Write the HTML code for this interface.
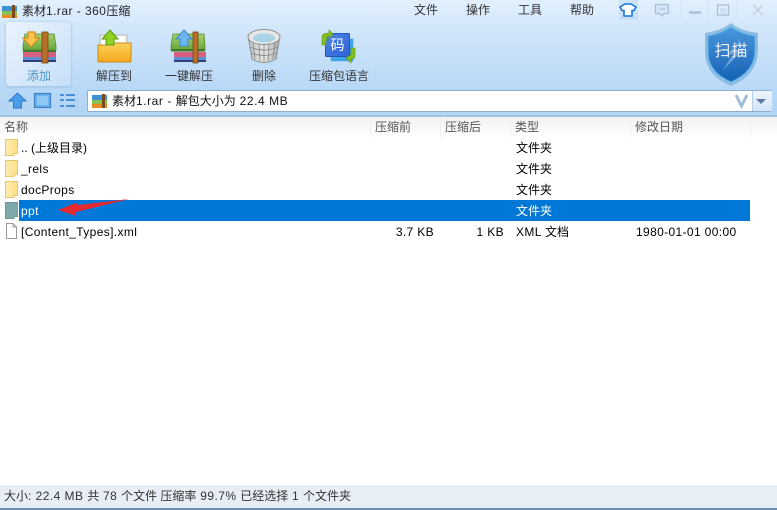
<!DOCTYPE html>
<html><head><meta charset="utf-8">
<style>
html,body{margin:0;padding:0;width:777px;height:510px;overflow:hidden;background:#fff}
body{position:relative;font-family:"Liberation Sans","Noto Sans CJK SC",sans-serif;font-size:12px;color:#000}
.t{position:absolute;white-space:nowrap;line-height:16px}
.c{text-align:center}
.ab{position:absolute;left:0;top:0}
.l{letter-spacing:.36px}
.m{letter-spacing:.55px}
</style></head><body>
<div style="position:absolute;left:0;top:0;width:777px;height:116px;background:linear-gradient(#e2f0fd 0,#d2e6fa 30px,#b8d8f7 90px,#b1d3f5 116px)"></div>
<div style="position:absolute;left:0;top:115px;width:777px;height:2px;background:#a5c4e2"></div>
<!-- add button highlight -->
<div style="position:absolute;left:6px;top:22px;width:65px;height:64px;border-radius:3px;background:linear-gradient(135deg,#eaf4fe,#c6dff8);box-shadow:0 0 2px #a9c9e9,0 1px 2px #9dc0e4"></div>
<svg class="ab" width="777" height="116" viewBox="0 0 777 116">
<defs>
<linearGradient id="gb" x1="0" y1="0" x2="0" y2="1"><stop offset="0" stop-color="#a5cf6a"/><stop offset="1" stop-color="#67a83c"/></linearGradient>
<linearGradient id="fy" x1="0" y1="0" x2="0" y2="1"><stop offset="0" stop-color="#fcd25a"/><stop offset="1" stop-color="#f4a81c"/></linearGradient>
<linearGradient id="sh" x1="0" y1="0" x2="0" y2="1"><stop offset="0" stop-color="#4c97dc"/><stop offset="1" stop-color="#1561b4"/></linearGradient>
<linearGradient id="sq" x1="0" y1="0" x2="1" y2="1"><stop offset="0" stop-color="#4f86e8"/><stop offset="1" stop-color="#2f62d4"/></linearGradient>
<linearGradient id="tr" x1="0" y1="0" x2="1" y2="0"><stop offset="0" stop-color="#c0c1c1"/><stop offset=".5" stop-color="#e8e9e9"/><stop offset="1" stop-color="#a8a9a9"/></linearGradient>
</defs>
<!-- title icon -->
<rect x="2" y="6" width="15" height="5" fill="#3f92d2"/><rect x="2" y="11" width="15" height="5" fill="#8cc152"/><rect x="2" y="15" width="15" height="3" fill="#e78b22"/><rect x="12" y="5" width="3" height="13" fill="#7b4a1a"/>
<!-- add -->
<path d="M25 34H54L56 46V50H23V46z" fill="url(#gb)" stroke="#4e8a2e" stroke-width=".8"/>
<rect x="23" y="50" width="33" height="2" fill="#3f7d28"/>
<rect x="23" y="52" width="33" height="5" fill="#d85f7e"/>
<rect x="23" y="57" width="33" height="4" fill="#5f8ed2"/>
<rect x="23" y="60" width="33" height="2" fill="#2c3f78"/>
<rect x="42" y="32" width="6" height="31" fill="#b86e26" stroke="#7b4716" stroke-width=".8"/>
<path d="M28 32H35V38H39L31 47 23 38H28z" fill="#fbc64b" stroke="#d98a1c" stroke-width="1.200"/>
<!-- extract -->
<path d="M100 35H127V60H100z" fill="#f4f4f2" stroke="#b9b9b0"/>
<path d="M101 37H124V46H101z" fill="#fff"/>
<path d="M98 45H110L113 43H131V61Q131 62 130 62H99Q98 62 98 61z" fill="url(#fy)" stroke="#c98a1a"/>
<path d="M106 45V39H102L110 30 118 39H114V45z" fill="#8fd21f" stroke="#5b9a16"/>
<!-- one-click -->
<path d="M173 34H204L205 46V50H171V46z" fill="url(#gb)" stroke="#4e8a2e" stroke-width=".8"/>
<rect x="171" y="49" width="34" height="2.500" fill="#3f7d28"/>
<rect x="174" y="52" width="32" height="5" fill="#d85f7e"/>
<rect x="174" y="57" width="32" height="4" fill="#5f8ed2"/>
<rect x="174" y="60" width="32" height="2" fill="#2c3f78"/>
<rect x="193" y="32" width="5" height="31" fill="#b86e26" stroke="#7b4716" stroke-width=".8"/>
<path d="M180 46V39H176L184 30 192 39H188V46z" fill="#6db7f3" stroke="#3f86cc"/>
<!-- delete -->
<path d="M248 36L252 59Q264 66 276 59L280 36z" fill="url(#tr)" stroke="#8f9090"/>
<path d="M253 43L255 59M259 44L260 61M264 44V62M269 44L268 61M275 43L273 59M250 47Q264 53 278 47M251 53Q264 58 277 53" stroke="#8a8a8a" stroke-width=".9" fill="none"/>
<ellipse cx="264" cy="37" rx="16" ry="7.500" fill="#e5e6e6" stroke="#8f9090"/>
<ellipse cx="264" cy="38" rx="11" ry="4.500" fill="#a9d2e6"/>
<!-- code -->
<rect x="330.500" y="38.500" width="23" height="23" fill="#3fa5ea" stroke="#9fd3f5"/>
<rect x="325.500" y="33.500" width="24" height="23" rx="1" fill="url(#sq)" stroke="#2454b4"/>
<path d="M322 45V37Q322 33 329 33V30L333 34 329 39V36Q326 36 326 45z" fill="#84bd22" stroke="#5f9215" stroke-width=".6"/>
<path d="M355 48V56Q355 59 351 59V63L346 58 351 54V56Q351 56 351 48z" fill="#84bd22" stroke="#5f9215" stroke-width=".6"/>
<!-- nav icons -->
<path d="M9 101L17.500 93 26 101H21.500V108H13.500V101z" fill="#4a9de8" stroke="#2f78c4"/>
<rect x="34.500" y="93.500" width="16" height="14" fill="#6cb0ec" stroke="#3f7fc4" stroke-width="1.200"/>
<rect x="37" y="96" width="11" height="9" fill="#8ec6f4"/>
<path d="M60 94h4v2h-4zM66 94h9v2h-9zM60 99h4v2h-4zM66 99h9v2h-9zM60 105h4v2h-4zM66 105h9v2h-9z" fill="#4a8fd4"/>
<!-- skin shirt -->
<rect x="619" y="0" width="19" height="20" fill="#bcd9f6" opacity=".6"/>
<path d="M625 4H631L636 7 634 10.500H632V16H624V10.500H622L620 7z" fill="#fff" stroke="#1477d8" stroke-width="1.600"/>
<!-- msg -->
<path d="M655.500 4.500H668.500V13.500H664L662 16 660 13.500H655.500z" fill="#d3e5f7" stroke="#a8bfd6" stroke-width="1.300"/>
<path d="M659 9H665" stroke="#a8bfd6"/>
<!-- sep -->
<path d="M681 0V18M708.500 0V18M737 0V18" stroke="#cfe2f6"/>
<path d="M689 12.500H701" stroke="#a9bfd5" stroke-width="2.400"/>
<rect x="717.500" y="5" width="11" height="10" fill="none" stroke="#a9bfd5" stroke-width="1.300"/>
<rect x="720" y="8" width="6" height="5" fill="#cfe0f2"/>
<path d="M753 5L763 15M763 5L753 15" stroke="#dbe7f3" stroke-width="3.200"/>
<path d="M753 5L763 15M763 5L753 15" stroke="#a9bfd5" stroke-width="1" opacity=".6"/>
<!-- shield -->
<path d="M731 23Q741 31 758 33V52Q757 75 731 86 705 75 705 52V33Q721 31 731 23z" fill="#8cbbe2"/>
<path d="M731 27Q741 34 755 36V52Q754 72 731 82 708 72 708 52V36Q721 34 731 27z" fill="url(#sh)" stroke="#58b6ee" stroke-width="1"/>
<path d="M741 38L726 56 733 54 723 70 744 49 735 51z" fill="#6aa2dc"/>
</svg>
<!-- address bar -->
<div style="position:absolute;left:87px;top:90px;width:683px;height:20px;background:#fff;border:1px solid #8fadcc;border-radius:2px"></div>
<div style="position:absolute;left:752px;top:91px;width:19px;height:20px;background:linear-gradient(#eef5fd,#d3e5f8);border-left:1px solid #b5cde5"></div>
<svg class="ab" width="777" height="116" viewBox="0 0 777 116">
<rect x="92" y="95" width="15" height="5" fill="#3f92d2"/><rect x="92" y="100" width="15" height="5" fill="#8cc152"/><rect x="92" y="104" width="15" height="4" fill="#e78b22"/><rect x="102" y="94" width="3" height="14" fill="#7b4a1a"/>
<path d="M736 95L741.500 106 747 95" fill="none" stroke="#9cbbd9" stroke-width="2.800"/>
<path d="M756 99H766L761 104z" fill="#5d7aa6"/>
</svg>
<!-- titlebar text -->
<div class="t" style="left:22px;top:3px;color:#222">素材<span style="letter-spacing:.45px">1.rar - 360</span>压缩</div>
<div class="t" style="left:414px;top:2px;color:#333">文件</div>
<div class="t" style="left:466px;top:2px;color:#333">操作</div>
<div class="t" style="left:518px;top:2px;color:#333">工具</div>
<div class="t" style="left:570px;top:2px;color:#333">帮助</div>
<!-- toolbar labels -->
<div class="t c" style="left:0;top:68px;width:78px;color:#4d93c9">添加</div>
<div class="t c" style="left:84px;top:68px;width:60px;color:#333">解压到</div>
<div class="t c" style="left:154px;top:68px;width:70px;color:#333">一键解压</div>
<div class="t c" style="left:234px;top:68px;width:60px;color:#333">删除</div>
<div class="t c" style="left:299px;top:68px;width:80px;color:#333">压缩包语言</div>
<div class="t c" style="left:325px;top:37px;width:25px;color:#fff;font-size:14px">码</div>
<div class="t c" style="left:705px;top:44px;width:53px;color:#e8eef6;font-size:16px;letter-spacing:1px">扫描</div>
<div class="t" style="left:112px;top:93px;color:#111">素材<span class="m">1.rar - </span>解包大小为<span class="m"> 22.4 MB</span></div>
<!-- list header -->
<div style="position:absolute;left:0;top:117px;width:777px;height:20px;background:linear-gradient(#f1f1f1,#fff)"></div>
<svg class="ab" width="777" height="140"><path d="M370.500 117V137M440.500 117V137M510.500 117V137M630.500 117V137M750.500 117V137" stroke="#ededed"/></svg>
<div class="t" style="left:4px;top:119px;color:#555">名称</div>
<div class="t" style="left:375px;top:119px;color:#555">压缩前</div>
<div class="t" style="left:445px;top:119px;color:#555">压缩后</div>
<div class="t" style="left:515px;top:119px;color:#555">类型</div>
<div class="t" style="left:635px;top:119px;color:#555">修改日期</div>
<!-- selection -->
<div style="position:absolute;left:19px;top:200px;width:731px;height:21px;background:#0078d7"></div>
<!-- icons -->
<svg class="ab" width="777" height="245">
<defs><linearGradient id="fo" x1="0" y1="0" x2="1" y2="0"><stop offset="0" stop-color="#fdebb0"/><stop offset="1" stop-color="#fddf87"/></linearGradient></defs>
<g fill="url(#fo)" stroke="#e9c66a"><path d="M5.500 139.500H17.500V153.500H14V155.500H5.500z"/><path d="M5.500 160.500H17.500V174.500H14V176.500H5.500z"/><path d="M5.500 181.500H17.500V195.500H14V197.500H5.500z"/></g>
<path d="M5.500 202.500H17.500V216.500H14V218.500H5.500z" fill="#7da9ab" stroke="#6f9a9d"/>
<path d="M6.500 223.500H13L16.500 227V238.500H6.500z" fill="#fff" stroke="#9a9a9a"/><path d="M13 223.500V227H16.500" fill="none" stroke="#9a9a9a"/>
<!-- arrow -->
<path d="M129 199L78 205 76 203 58 210 76 216 76 212z" fill="#e6292f"/>
</svg>
<!-- rows -->
<div class="t" style="left:21px;top:140px">.. (上级目录)</div>
<div class="t l" style="left:21px;top:161px">_rels</div>
<div class="t l" style="left:21px;top:182px">docProps</div>
<div class="t l" style="left:21px;top:203px;color:#fff">ppt</div>
<div class="t l" style="left:21px;top:224px">[Content_Types].xml</div>
<div class="t" style="left:516px;top:140px">文件夹</div>
<div class="t" style="left:516px;top:161px">文件夹</div>
<div class="t" style="left:516px;top:182px">文件夹</div>
<div class="t" style="left:516px;top:203px;color:#fff">文件夹</div>
<div class="t" style="left:516px;top:224px"><span class="l">XML </span>文档</div>
<div class="t l" style="right:343px;top:224px">3.7 KB</div>
<div class="t l" style="right:273px;top:224px">1 KB</div>
<div class="t l" style="left:636px;top:224px">1980-01-01 00:00</div>
<!-- status bar -->
<div style="position:absolute;left:0;top:485px;width:777px;height:23px;background:#e8eef5"></div>
<div style="position:absolute;left:0;top:508px;width:777px;height:2px;background:#6f8fb0"></div>
<div class="t" style="left:4px;top:488px;color:#333">大小<span style="letter-spacing:.45px">: 22.4 MB </span>共<span style="letter-spacing:.45px"> 78 </span>个文件 压缩率<span style="letter-spacing:.45px"> 99.7% </span>已经选择<span style="letter-spacing:.45px"> 1 </span>个文件夹</div>
</body></html>
